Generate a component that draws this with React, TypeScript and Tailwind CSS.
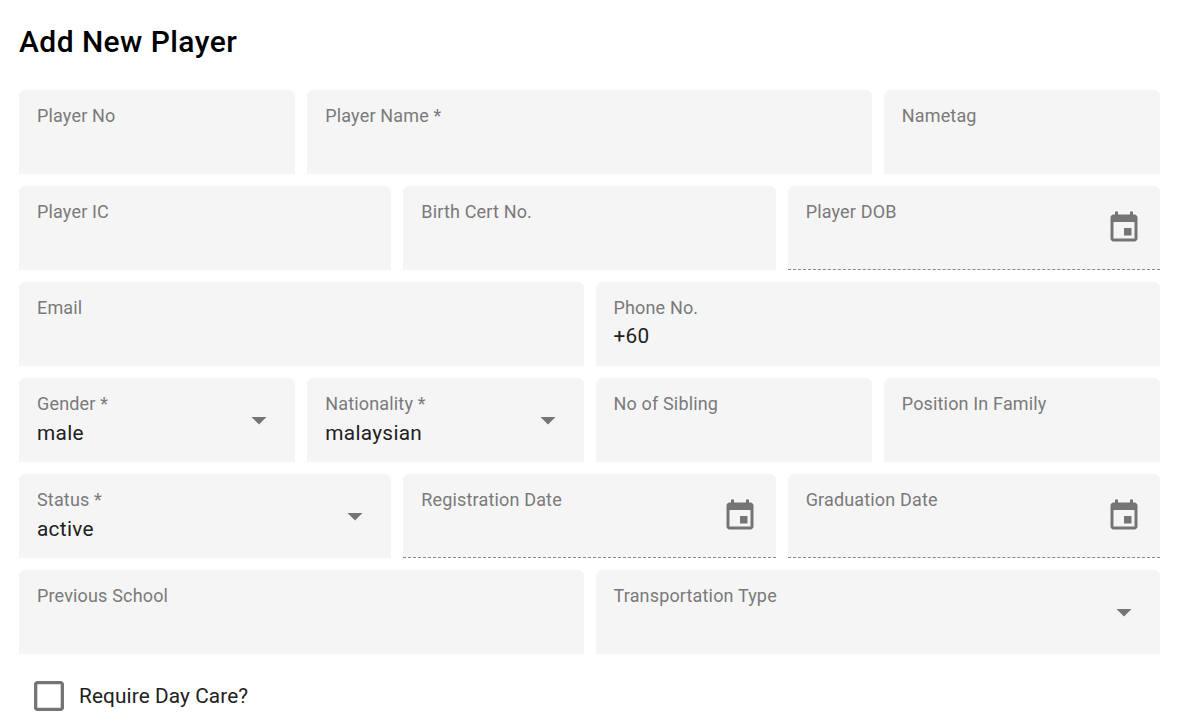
const eventPath =
  "M17 12h-5v5h5v-5zM16 1v2H8V1H6v2H5c-1.11 0-1.99.9-1.99 2L3 19c0 1.1.89 2 2 2h14c1.1 0 2-.9 2-2V5c0-1.1-.9-2-2-2h-1V1h-2zm3 18H5V8h14v11z";

const EventIcon = () => (
  <svg viewBox="0 0 24 24" className="w-9 h-9 fill-[#757575] shrink-0">
    <path d={eventPath} />
  </svg>
);

const ArrowIcon = () => (
  <svg viewBox="0 0 24 24" className="w-9 h-9 fill-[#757575] shrink-0">
    <path d="M7 10l5 5 5-5z" />
  </svg>
);

type FieldProps = {
  label: string;
  value?: string;
  span: string;
  kind?: "date" | "select";
};

const Field = ({ label, value, span, kind }: FieldProps) => {
  const isDate = kind === "date";
  const isSelect = kind === "select";

  return (
    <div
      className={`${span} h-[84px] bg-[#f5f5f5] rounded-t-md flex items-center justify-between pl-[18px] ${
        isDate
          ? "pr-[18px] border-b border-dashed border-[#8a8a8a]"
          : isSelect
            ? "pr-[18px]"
            : ""
      }`}
    >
      <div className="self-start pt-[14px] min-w-0">
        <div className="text-[18px] leading-[24px] tracking-[0.16px] text-[#7a7a7a]">{label}</div>
        {value && (
          <div
            className={`text-[20.8px] leading-[32px] tracking-[0.3px] text-[#212121] ${
              isSelect ? "mt-[1px]" : ""
            }`}
          >
            {value}
          </div>
        )}
      </div>
      {isDate && <EventIcon />}
      {isSelect && <ArrowIcon />}
    </div>
  );
};

const App = () => {
  return (
    <div className="h-[728px] overflow-hidden bg-white px-[19px] pr-[17px] font-['Roboto',sans-serif]">
      <h1 className="pt-[22px] pb-[29px] text-[30px] leading-[39px] tracking-[0.43px] font-medium text-black">
        Add New Player
      </h1>

      <div className="grid grid-cols-12 gap-3">
        <Field span="col-span-3" label="Player No" />
        <Field span="col-span-6" label="Player Name *" />
        <Field span="col-span-3" label="Nametag" />

        <Field span="col-span-4" label="Player IC" />
        <Field span="col-span-4" label="Birth Cert No." />
        <Field span="col-span-4" label="Player DOB" kind="date" />

        <Field span="col-span-6" label="Email" />
        <Field span="col-span-6" label="Phone No." value="+60" />

        <Field span="col-span-3" label="Gender *" value="male" kind="select" />
        <Field span="col-span-3" label="Nationality *" value="malaysian" kind="select" />
        <Field span="col-span-3" label="No of Sibling" />
        <Field span="col-span-3" label="Position In Family" />

        <Field span="col-span-4" label="Status *" value="active" kind="select" />
        <Field span="col-span-4" label="Registration Date" kind="date" />
        <Field span="col-span-4" label="Graduation Date" kind="date" />

        <Field span="col-span-6" label="Previous School" />
        <Field span="col-span-6" label="Transportation Type" kind="select" />
      </div>

      <label className="flex items-center mt-[22px] ml-[10px] gap-[10px]">
        <svg viewBox="0 0 24 24" className="w-10 h-10 fill-[#757575]">
          <path d="M19 5v14H5V5h14m0-2H5c-1.1 0-2 .9-2 2v14c0 1.1.9 2 2 2h14c1.1 0 2-.9 2-2V5c0-1.1-.9-2-2-2z" />
        </svg>
        <span className="text-[20.8px] leading-[28px] tracking-[0.1px] text-[#212121]">Require Day Care?</span>
      </label>
    </div>
  );
};

export default App;
